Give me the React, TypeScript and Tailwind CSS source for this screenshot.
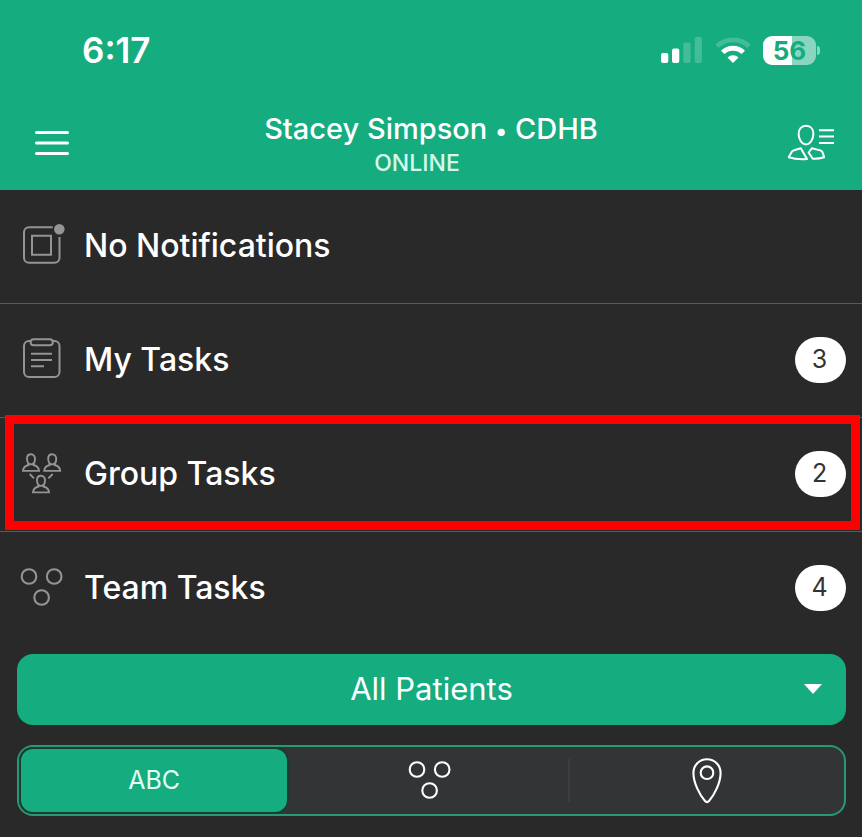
import React from "react"

const NotificationsIcon = () => (
  <svg width="44" height="44" viewBox="0 0 44 44" fill="none" stroke="currentColor" strokeWidth="2" className="overflow-visible">
    <path d="M32.7 3.3H9a5 5 0 0 0-5 5v25.4a5 5 0 0 0 5 5h25.5a5 5 0 0 0 5-5V13" />
    <path d="M12 11.7h19v19H12z" />
    <circle cx="39.3" cy="5.3" r="5.3" fill="currentColor" stroke="none" />
  </svg>
)

const ClipboardIcon = () => (
  <svg width="44" height="44" viewBox="0 0 44 44" fill="none" stroke="currentColor" strokeWidth="2">
    <path d="M10.8 3H9a5 5 0 0 0-5 5v26a5 5 0 0 0 5 5h25.5a5 5 0 0 0 5-5V8a5 5 0 0 0-5-5h-1.8" />
    <rect x="10.6" y="1.2" width="22.2" height="6" rx="3" />
    <path d="M11 15.7h21M11 22h21M11 28.3h13" />
  </svg>
)

const GroupIcon = () => (
  <svg width="44" height="44" viewBox="0 0 44 44" fill="none" stroke="currentColor" strokeWidth="1.9">
    <path id="person" d="M11 2.3c2.6 0 4 1.900 4 4.500 0 3.300-1.600 5.600-4 5.600s-4-2.300-4-5.600c0-2.600 1.400-4.500 4-4.500zM8.200 11.600v1.600c-3.500.7-5 2-5.200 5.700h16c-.2-3.700-1.700-5-5.200-5.700v-1.600" />
    <use href="#person" x="21.200" />
    <use href="#person" x="10" y="21.500" />
    <path d="M9.700 22l4.300 4.300M32.700 22l-4.300 4.300" />
  </svg>
)

const TeamIcon = () => (
  <svg width="44" height="44" viewBox="0 0 44 44" fill="none" stroke="currentColor" strokeWidth="2.1">
    <circle cx="9" cy="10.500" r="7.300" />
    <circle cx="34.200" cy="10.500" r="7.300" />
    <circle cx="21.600" cy="31.500" r="7.300" />
  </svg>
)

const PinIcon = () => (
  <svg width="32" height="48" viewBox="0 0 32 48" fill="none" stroke="currentColor" strokeWidth="2.1">
    <path d="M16 2.300C8.200 2.300 2.400 8.200 2.400 16c0 10 6.600 22.500 11.600 28q2 2.200 4 0c5-5.500 11.600-18 11.600-28C29.600 8.200 23.800 2.300 16 2.300z" />
    <circle cx="16" cy="15.700" r="6.300" />
  </svg>
)

const ContactIcon = () => (
  <svg width="50" height="40" viewBox="0 0 50 40" fill="none" stroke="currentColor" strokeWidth="2">
    <path d="M20 2.800c4.600 0 7.400 3.400 7.400 8 0 5.700-3.400 10.600-7.400 10.600s-7.400-4.900-7.400-10.600c0-4.600 2.800-8 7.400-8z" />
    <path d="M14.800 25.300L8 27.300Q6 28 5.200 29.700L2.800 34.300c5.500 1.700 12 2.200 18.200 1.700z" strokeLinejoin="round" />
    <path d="M25.800 25.300l-3.200 4.200 4.200 6.300c4 .2 7.500-.3 11.300-1.500l-1.300-4.500q-.7-1.800-2.500-2.400z" strokeLinejoin="round" />
    <path d="M33 7.200h15M33 13.600h15M33 20h15" />
  </svg>
)

const MenuIcon = () => (
  <svg width="34" height="26" viewBox="0 0 34 26" stroke="currentColor" strokeWidth="3" strokeLinecap="round">
    <path d="M1.500 2.500h31M1.500 13h31M1.500 23.500h31" />
  </svg>
)

const SignalIcon = () => (
  <svg width="42" height="26" viewBox="0 0 42 26" fill="currentColor">
    <rect x="0" y="16" width="7.300" height="10" rx="2" />
    <rect x="11" y="11.500" width="7.300" height="14.500" rx="2" />
    <rect x="22.300" y="5.500" width="7.300" height="20.500" rx="2" opacity=".2" />
    <rect x="33.600" y="0" width="7.300" height="26" rx="2" opacity=".2" />
  </svg>
)

const WifiIcon = () => (
  <svg width="36" height="26" viewBox="0 0 36 26" fill="none" stroke="currentColor" strokeWidth="4.800">
    <path d="M2 9.300a23 23 0 0 1 32 0" opacity=".2" />
    <path d="M7.700 15.400a14.800 14.800 0 0 1 20.600 0" />
    <path d="M18 26l-5.500-5.600a8 8 0 0 1 11 0z" fill="currentColor" stroke="none" />
  </svg>
)

const tasks = [
  { title: "No Notifications", icon: NotificationsIcon },
  { title: "My Tasks", icon: ClipboardIcon, count: 3 },
  { title: "Group Tasks", icon: GroupIcon, count: 2, highlighted: true },
  { title: "Team Tasks", icon: TeamIcon, count: 4 },
]

const Header = () => {
  return (
    <header className="bg-[#15ac7f] text-white">
      <div className="flex h-[100px] items-center justify-between pr-[42px] pl-[82px]">
        <span className="text-[35px] font-semibold">6:17</span>
        <div className="flex items-center gap-3">
          <SignalIcon />
          <WifiIcon />
          <div className="flex items-center gap-px">
            <span className="flex h-[29px] w-[53px] items-center justify-center rounded-[9px] bg-[linear-gradient(90deg,#fff_55%,#8bd4bd_55%)] text-[26px] leading-[29px] font-bold text-[#15ac7f]">
              56
            </span>
            <span className="h-[9px] w-[3px] rounded-r-full bg-[#8bd4bd]" />
          </div>
        </div>
      </div>
      <div className="grid h-[90px] grid-cols-[1fr_auto_1fr] items-center px-[26px] pb-1">
        <button aria-label="Menu" className="justify-self-start pl-[9px]">
          <MenuIcon />
        </button>
        <div className="pt-1 text-center">
          <h1 className="text-[29px] leading-[36px] font-medium">
            Stacey Simpson{" "}
            <span className="align-middle text-[23px] leading-none">•</span>{" "}
            CDHB
          </h1>
          <p className="pr-7 text-[23px] leading-[32px] font-medium text-[#d6f8ea]">
            ONLINE
          </p>
        </div>
        <button aria-label="Contacts" className="justify-self-end">
          <ContactIcon />
        </button>
      </div>
    </header>
  )
}

const TaskList = () => {
  return (
    <ul>
      {tasks.map(({ title, icon: Icon, count, highlighted }) => (
        <li
          key={title}
          className="relative border-b border-[#5a5a5a] last:border-b-0"
        >
          <button className="flex h-[113px] w-full items-center gap-5 pr-4 pb-px pl-5 text-left">
            <span className="text-[#949494]">
              <Icon />
            </span>
            <span className="flex-1 text-[32px] font-medium text-white">
              {title}
            </span>
            {count && (
              <span className="flex h-[46px] w-[51px] items-center justify-center rounded-full bg-white pr-[2px] text-[25px] text-[#333]">
                {count}
              </span>
            )}
          </button>
          {highlighted && (
            <div className="pointer-events-none absolute -top-[3px] right-[2px] bottom-px left-[5px] border-[9px] border-[#ff0000]" />
          )}
        </li>
      ))}
    </ul>
  )
}

const PatientFilter = () => {
  return (
    <div className="flex flex-col gap-5 pt-[9px] pr-4 pb-5 pl-[17px]">
      <div className="relative">
        <select
          aria-label="Patients"
          className="h-[71px] w-full appearance-none rounded-2xl bg-[#15ac7f] text-center text-[31px] text-white"
        >
          <option>All Patients</option>
        </select>
        <svg
          width="18"
          height="10"
          viewBox="0 0 18 10"
          className="pointer-events-none absolute top-[30px] right-6 fill-white"
        >
          <path d="M0 0h18L9 10z" />
        </svg>
      </div>
      <div className="grid h-[71px] grid-cols-[1fr_1fr_2px_1fr] rounded-2xl border-2 border-[#259a75] bg-[#333436] text-white">
        <div className="pr-1">
          <button
            aria-pressed="true"
            className="h-full w-full rounded-[14px] border-2 border-[#1d3b31] bg-[#15ac7f] text-[25px] text-[#e2fff5]"
          >
            ABC
          </button>
        </div>
        <button aria-label="Teams" className="flex items-center justify-center">
          <TeamIcon />
        </button>
        <span className="my-3 bg-[#3d3e42]" />
        <button aria-label="Locations" className="flex items-center justify-center">
          <PinIcon />
        </button>
      </div>
    </div>
  )
}

const App = () => {
  return (
    <main className="min-h-screen bg-[#292929] font-[Inter,sans-serif]">
      <Header />
      <TaskList />
      <PatientFilter />
    </main>
  )
}

export default App
